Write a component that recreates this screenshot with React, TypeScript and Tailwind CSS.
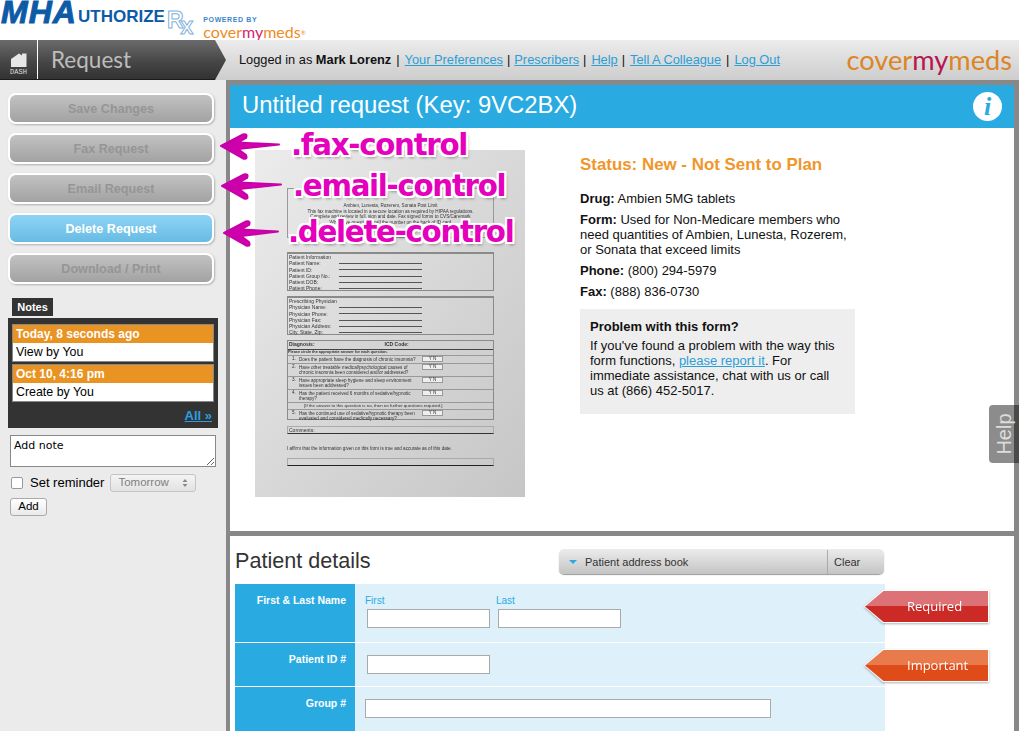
import React from 'react';

const sans = "font-['Liberation_Sans',Arial,sans-serif]";

const SideButton = ({ label, active }: { label: string; active?: boolean }) => (
    <button
        className={
            active
                ? "h-[31px] w-[206px] rounded-[8px] border-2 border-white bg-gradient-to-b from-[#8dd4f6] to-[#68bbe4] pt-[1px] text-[12.6px] font-bold text-white shadow-[1px_1px_2px_rgba(0,0,0,0.25)]"
                : "h-[31px] w-[206px] rounded-[8px] border-2 border-white bg-gradient-to-b from-[#c2c2c2] to-[#a2a2a2] pt-[1px] text-[12.6px] font-bold text-[#959595] shadow-[1px_1px_2px_rgba(0,0,0,0.25)]"
        }
    >
        {label}
    </button>
);

const NoteEntry = ({ title, body }: { title: string; body: string }) => (
    <div className="border border-[#888] bg-white">
        <div className="flex h-[18px] items-center bg-[#e89322] pl-[3px] text-[12px] font-bold text-white">{title}</div>
        <div className="flex h-[18px] items-center pl-[3px] text-[12.4px] text-black">{body}</div>
    </div>
);

const FormBox = ({ labels, title }: { labels: string[]; title: string }) => (
    <div className="h-[39px] border border-[#8a8a8a] border-t-2 pl-[1px] text-[5px] leading-[6.3px] text-[#333]">
        <div>{title}</div>
        {labels.map((l) => (
            <div key={l} className="flex items-center">
                <span className="w-[50px]">{l}</span>
                <span className="h-[1px] w-[83px] bg-[#555]"></span>
            </div>
        ))}
    </div>
);

const Question = ({ n, text }: { n: string; text: string }) => (
    <div className="flex border-t border-[#999] pl-[4px] text-[4.6px] leading-[5px] text-[#333]">
        <span className="w-[7px]">{n}</span>
        <span className="w-[122px] py-[1px]">{text}</span>
        <span className="ml-[1px] h-[6px] w-[21px] border border-[#999] bg-[#eee] text-center leading-[4px]">Y N</span>
    </div>
);

const FormThumb = () => (
    <div className="mt-[22px] ml-[25px] h-[347px] w-[270px] shrink-0 bg-gradient-to-br from-[#ececec] via-[#d8d8d8] to-[#c6c6c6] pt-[38px] pl-[32px] blur-[0.3px]">
        <div className="w-[207px]">
            <div className="h-[50px] border border-[#999] pt-[14px] text-center text-[4.6px] leading-[5.6px] text-[#333]">
                <div>Ambien, Lunesta, Rozerem, Sonata Post Limit</div>
                <div>This fax machine is located in a secure location as required by HIPAA regulations.</div>
                <div>Complete and review in full, sign and date. Fax signed forms to CVS/Caremark</div>
                <div>Who have questions, call the number on the back of ID card</div>
            </div>
            <div className="mt-[14px]">
                <FormBox title="Patient Information" labels={['Patient Name:', 'Patient ID:', 'Patient Group No.:', 'Patient DOB:', 'Patient Phone:']} />
            </div>
            <div className="mt-[5px]">
                <FormBox title="Prescribing Physician" labels={['Physician Name:', 'Physician Phone:', 'Physician Fax:', 'Physician Address:', 'City, State, Zip:']} />
            </div>
            <div className="mt-[5px] h-[80px] border border-[#8a8a8a] bg-[#d0d0d0]/40">
                <div className="flex h-[9px] items-center gap-[70px] border-b border-[#444] pl-[1px] text-[5px] font-bold text-[#333]">
                    <span>Diagnosis:</span>
                    <span>ICD Code:</span>
                </div>
                <div className="text-[3.8px] leading-[5px] font-bold text-[#333]">Please circle the appropriate answer for each question.</div>
                <Question n="1." text="Does the patient have the diagnosis of chronic insomnia?" />
                <Question n="2." text="Have other treatable medical/psychological causes of chronic insomnia been considered and/or addressed?" />
                <Question n="3." text="Have appropriate sleep hygiene and sleep environment issues been addressed?" />
                <Question n="4." text="Has the patient received 6 months of sedative/hypnotic therapy?" />
                <div className="border-t border-[#999] pl-[16px] text-[4.4px] leading-[6px] text-[#333]">[If the answer to this question is no, then no further questions required.]</div>
                <Question n="5." text="Has the continued use of sedative/hypnotic therapy been evaluated and considered medically necessary?" />
            </div>
            <div className="mt-[6px] h-[8px] border border-[#aaa] border-b-[#333] pl-[1px] text-[5px] leading-[6px] text-[#333]">Comments:</div>
            <div className="mt-[12px] text-[4.6px] leading-[6px] text-[#333]">I affirm that the information given on this form is true and accurate as of this date.</div>
            <div className="mt-[6px] h-[8px] border border-[#aaa] border-b-[#222]"></div>
        </div>
    </div>
);

const Arrow = ({ tail }: { tail: number }) => (
    <svg width="64" height="30" viewBox="0 0 64 30">
        <defs>
            <linearGradient id="mag" x1="0" x2="1" y1="0" y2="0">
                <stop offset="0" stopColor="#c800a8" />
                <stop offset="1" stopColor="#e000b4" />
            </linearGradient>
        </defs>
        <path
            d={`M2 14 L24 2.5 Q29 1.5 27 6 L19 10.5 L${tail} 12.5 L19 17 L27 23 Q29 28 24 26.5 Z`}
            fill="url(#mag)"
            stroke="#c800a8"
            strokeWidth="2"
            strokeLinejoin="round"
        />
    </svg>
);

const Callout = ({ text, cls }: { text: string; cls: string }) => (
    <div className={"absolute font-['DejaVu_Sans',sans-serif] text-[29.3px] leading-none font-bold tracking-[-1.3px] text-[#e400bc] [text-shadow:2px_0_0_#fff,-2px_0_0_#fff,0_2px_0_#fff,0_-2px_0_#fff,2px_2px_0_#fff,-2px_2px_0_#fff,2px_-2px_0_#fff,-2px_-2px_0_#fff,2px_3px_3px_rgba(0,0,0,0.35)] " + cls}>
        {text}
    </div>
);

const Badge = ({ label, top, light, dark }: { label: string; top: string; light: string; dark: string }) => (
    <div className={"absolute left-[864px] h-[33px] w-[125px] drop-shadow-[0_1px_1px_rgba(0,0,0,0.3)] " + top}>
        <div className="h-full w-full bg-white p-[1px] [clip-path:polygon(0_50%,15%_0,100%_0,100%_100%,15%_100%)]">
            <div className="flex h-full w-full flex-col [clip-path:polygon(0_50%,15%_0,100%_0,100%_100%,15%_100%)]">
                <div className={"h-[15px] " + light}></div>
                <div className={"flex-1 " + dark}></div>
            </div>
        </div>
        <span className="absolute top-[7px] left-[43px] font-['Open_Sans',sans-serif] text-[13px] leading-[18px] font-medium text-white">{label}</span>
    </div>
);

const App: React.FC = () => {
    return (
        <div className={"relative h-[731px] w-full overflow-hidden bg-white " + sans}>
            {/* Top logos */}
            <div className="flex h-[40px] items-start bg-white">
                <span className="w-[78px] pl-[1px] text-[32px] leading-[24px] font-bold tracking-[1px] text-[#0d5ba6] italic [-webkit-text-stroke:1px_#0d5ba6]">MHA</span>
                <span className="mt-[7px] text-[17px] leading-[20px] font-bold text-[#0d5ba6]">UTHORIZE</span>
                <span className="mt-[7px] ml-[2px] text-[23px] leading-[26px] font-bold text-transparent [-webkit-text-stroke:1px_#7fb2dc]">R</span>
                <span className="mt-[15px] ml-[-3px] text-[23px] leading-[22px] font-bold text-transparent [-webkit-text-stroke:1px_#7fb2dc]">x</span>
                <div className="mt-[16px] ml-[10px] flex flex-col">
                    <span className="text-[7px] leading-[8px] font-bold tracking-[0.6px] text-[#3a87c8]">POWERED BY</span>
                    <span className="font-['Lato',sans-serif] text-[16px] leading-[15px] text-[#f08a24]">
                        cover<span className="text-[#d6246e]">my</span>meds<sup className="text-[6px]">®</sup>
                    </span>
                </div>
            </div>

            {/* Nav bar */}
            <div className="relative flex h-[40px] items-center bg-gradient-to-b from-[#ececec] via-[#dcdcdc] via-50% to-[#cdcdcd] pb-[1px] pl-[239px] text-[12.8px] text-[#111]">
                <div className="absolute top-0 left-0 flex h-[40px] w-[226px] border-b border-[#1c1c1c] bg-gradient-to-b from-[#6b6b6b] via-[#474747] via-55% to-[#323232] [clip-path:polygon(0_0,215px_0,226px_50%,215px_100%,0_100%)]">
                    <div className="flex w-[38px] flex-col items-center border-r border-white pt-[13px]">
                        <svg width="16" height="14" viewBox="0 0 16 14">
                            <path d="M0 6 L8 0.5 L11 2.5 L11 0.5 L15.5 0.5 L15.5 14 L0 14 Z" fill="#e6e6e6" />
                        </svg>
                        <span className="mt-[1px] font-['Liberation_Mono',monospace] text-[7px] leading-[8px] text-[#ddd]">DASH</span>
                    </div>
                    <span className="ml-[13px] self-center font-['Lato',sans-serif] text-[22.5px] leading-[30px] text-[#bdbdbd]">Request</span>
                </div>
                <span>Logged in as <b>Mark Lorenz</b></span>
                <span className="ml-[5px]">|</span>
                <a className="ml-[5px] text-[#2a9fd8] underline">Your Preferences</a>
                <span className="ml-[4px]">|</span>
                <a className="ml-[4px] text-[#2a9fd8] underline">Prescribers</a>
                <span className="ml-[4px]">|</span>
                <a className="ml-[5px] text-[#2a9fd8] underline">Help</a>
                <span className="ml-[4px]">|</span>
                <a className="ml-[5px] text-[#2a9fd8] underline">Tell A Colleague</a>
                <span className="ml-[5px]">|</span>
                <a className="ml-[5px] text-[#2a9fd8] underline">Log Out</a>
                <span className="ml-auto mr-[7px] font-['Lato',sans-serif] text-[27.2px] leading-[30px] text-[#dc8527]">
                    cover<span className="text-[#b8144f]">my</span>meds
                </span>
            </div>

            <div className="flex h-[651px]">
                {/* Sidebar */}
                <aside className="w-[226px] shrink-0 bg-[#ebebeb] pt-[13px]">
                    <div className="flex flex-col gap-[9px] pl-[8px]">
                        <SideButton label="Save Changes" />
                        <SideButton label="Fax Request" />
                        <SideButton label="Email Request" />
                        <SideButton label="Delete Request" active />
                        <SideButton label="Download / Print" />
                    </div>
                    <div className="mt-[14px] ml-[12px] flex h-[18px] w-[41px] items-center justify-center bg-[#333] text-[11px] font-bold text-white">Notes</div>
                    <div className="mt-[2px] ml-[8px] h-[110px] w-[210px] bg-[#333] px-[4px] pt-[6px]">
                        <div className="flex flex-col gap-[2px]">
                            <NoteEntry title="Today, 8 seconds ago" body="View by You" />
                            <NoteEntry title="Oct 10, 4:16 pm" body="Create by You" />
                        </div>
                        <div className="mt-[4px] pr-[2px] text-right text-[13px] font-bold text-[#2a9fe0] underline">All »</div>
                    </div>
                    <textarea
                        className="mt-[7px] ml-[10px] block h-[32px] w-[206px] border border-[#888] bg-white px-[3px] pt-[3px] font-['DejaVu_Sans',sans-serif] text-[11px] leading-[14px] text-black"
                        defaultValue="Add note"
                    />
                    <div className="mt-[6px] ml-[11px] flex items-center">
                        <span className="h-[12px] w-[12px] rounded-[2px] border border-[#999] bg-white"></span>
                        <span className="ml-[7px] text-[13px] text-black">Set reminder</span>
                        <span className="ml-[6px] flex h-[18px] w-[86px] items-center justify-between rounded-[3px] border border-[#c4c4c4] bg-gradient-to-b from-[#f4f4f4] to-[#e2e2e2] px-[7px] text-[11.5px] text-[#808080]">
                            Tomorrow
                            <svg width="6" height="10" viewBox="0 0 6 10">
                                <path d="M3 1 L5.5 4 L0.5 4 Z M3 9 L0.5 6 L5.5 6 Z" fill="#888" />
                            </svg>
                        </span>
                    </div>
                    <button className="mt-[5px] ml-[10px] block h-[18px] w-[37px] rounded-[3px] border border-[#aaa] bg-gradient-to-b from-white to-[#eaeaea] text-[11.5px] leading-none text-black">Add</button>
                </aside>

                {/* Main column */}
                <main className="flex min-w-0 flex-1 flex-col gap-[5px] bg-[#888] pt-[5px] pr-[5px] pl-[4px]">
                    <section className="h-[446px] shrink-0 bg-white">
                        <div className="flex h-[43px] items-center justify-between bg-[#29abe2] pr-[12px] pl-[12px]">
                            <h1 className="mt-[-3px] text-[23.85px] leading-none text-white">Untitled request (Key: 9VC2BX)</h1>
                            <span className="flex h-[29px] w-[29px] items-center justify-center rounded-full bg-white font-['Liberation_Serif',serif] text-[26px] leading-none font-bold text-[#29abe2] italic">i</span>
                        </div>
                        <div className="flex">
                            <FormThumb />
                            <div className="mt-[27px] ml-[55px] w-[275px] text-[13px] leading-[15px] text-[#111]">
                                <div className="text-[16.9px] leading-[19px] font-bold text-[#f0962b]">Status: New - Not Sent to Plan</div>
                                <div className="mt-[17px]"><b>Drug:</b> Ambien 5MG tablets</div>
                                <div className="mt-[6px] w-[270px]"><b>Form:</b> Used for Non-Medicare members who need quantities of Ambien, Lunesta, Rozerem, or Sonata that exceed limits</div>
                                <div className="mt-[6px]"><b>Phone:</b> (800) 294-5979</div>
                                <div className="mt-[6px]"><b>Fax:</b> (888) 836-0730</div>
                                <div className="mt-[10px] h-[105px] bg-[#eeeeee] px-[10px] pt-[10px]">
                                    <div className="font-bold">Problem with this form?</div>
                                    <div className="mt-[4px]">
                                        If you've found a problem with the way this form functions, <a className="text-[#2a9fd8] underline">please report it</a>. For immediate assistance, chat with us or call us at (866) 452-5017.
                                    </div>
                                </div>
                            </div>
                        </div>
                    </section>

                    <section className="flex-1 bg-white pl-[5px]">
                        <div className="flex h-[48px] w-[650px] items-start">
                            <h2 className="mt-[12px] text-[21.6px] leading-[25px] text-[#333]">Patient details</h2>
                            <div className="mt-[13px] ml-auto mr-[1px] flex h-[25px] w-[325px] rounded-[5px] bg-gradient-to-b from-[#ececec] via-[#d8d8d8] to-[#c4c4c4] pt-[1px] text-[11px] text-[#333] shadow-[0_1px_1px_rgba(0,0,0,0.4)]">
                                <div className="flex w-[269px] items-center border-r border-[#aaa] pl-[10px]">
                                    <span className="h-0 w-0 border-x-[4px] border-t-[4px] border-x-transparent border-t-[#29abe2]"></span>
                                    <span className="ml-[8px]">Patient address book</span>
                                </div>
                                <div className="flex flex-1 items-center pl-[6px]">Clear</div>
                            </div>
                        </div>

                        <div className="w-[650px] text-[10.5px]">
                            <div className="flex h-[59px] border-b border-white">
                                <div className="w-[120px] bg-[#29abe2] pt-[9px] pr-[9px] text-right font-bold text-white">First &amp; Last Name</div>
                                <div className="flex flex-1 gap-[8px] bg-[#def0fa] pl-[12px]">
                                    <div>
                                        <div className="mt-[11px] ml-[-2px] text-[10px] leading-[12px] text-[#29abe2]">First</div>
                                        <input className="mt-[2px] h-[19px] w-[123px] border border-[#aaa] bg-white" />
                                    </div>
                                    <div>
                                        <div className="mt-[11px] ml-[-2px] text-[10px] leading-[12px] text-[#29abe2]">Last</div>
                                        <input className="mt-[2px] h-[19px] w-[123px] border border-[#aaa] bg-white" />
                                    </div>
                                </div>
                            </div>
                            <div className="flex h-[44px] border-b border-white">
                                <div className="w-[120px] bg-[#29abe2] pt-[9px] pr-[9px] text-right font-bold text-white">Patient ID #</div>
                                <div className="flex-1 bg-[#def0fa] pt-[12px] pl-[12px]">
                                    <input className="h-[19px] w-[123px] border border-[#aaa] bg-white" />
                                </div>
                            </div>
                            <div className="flex h-[44px]">
                                <div className="w-[120px] bg-[#29abe2] pt-[9px] pr-[9px] text-right font-bold text-white">Group #</div>
                                <div className="flex-1 bg-[#def0fa] pt-[12px] pl-[10px]">
                                    <input className="h-[19px] w-[406px] border border-[#aaa] bg-white" />
                                </div>
                            </div>
                        </div>
                    </section>
                </main>
            </div>

            {/* Annotations lying over the page */}
            <div className="absolute top-[132px] left-[219px]"><Arrow tail={60} /></div>
            <div className="absolute top-[172px] left-[220px]"><Arrow tail={61} /></div>
            <div className="absolute top-[219px] left-[222px]"><Arrow tail={56} /></div>
            <Callout text=".fax-control" cls="top-[131px] left-[291px]" />
            <Callout text=".email-control" cls="top-[172px] left-[293px]" />
            <Callout text=".delete-control" cls="top-[218px] left-[288px]" />

            <Badge label="Required" top="top-[590px]" light="bg-[#dc7176]" dark="bg-[#cc2a26]" />
            <Badge label="Important" top="top-[649px]" light="bg-[#e97a4c]" dark="bg-[#df4c19]" />

            <div className="absolute top-[405px] right-0 flex h-[58px] w-[30px] items-center justify-center rounded-l-[4px] bg-black/45">
                <span className="-rotate-90 text-[20px] leading-none text-[#ddd]">Help</span>
            </div>
        </div>
    );
};

export default App;
